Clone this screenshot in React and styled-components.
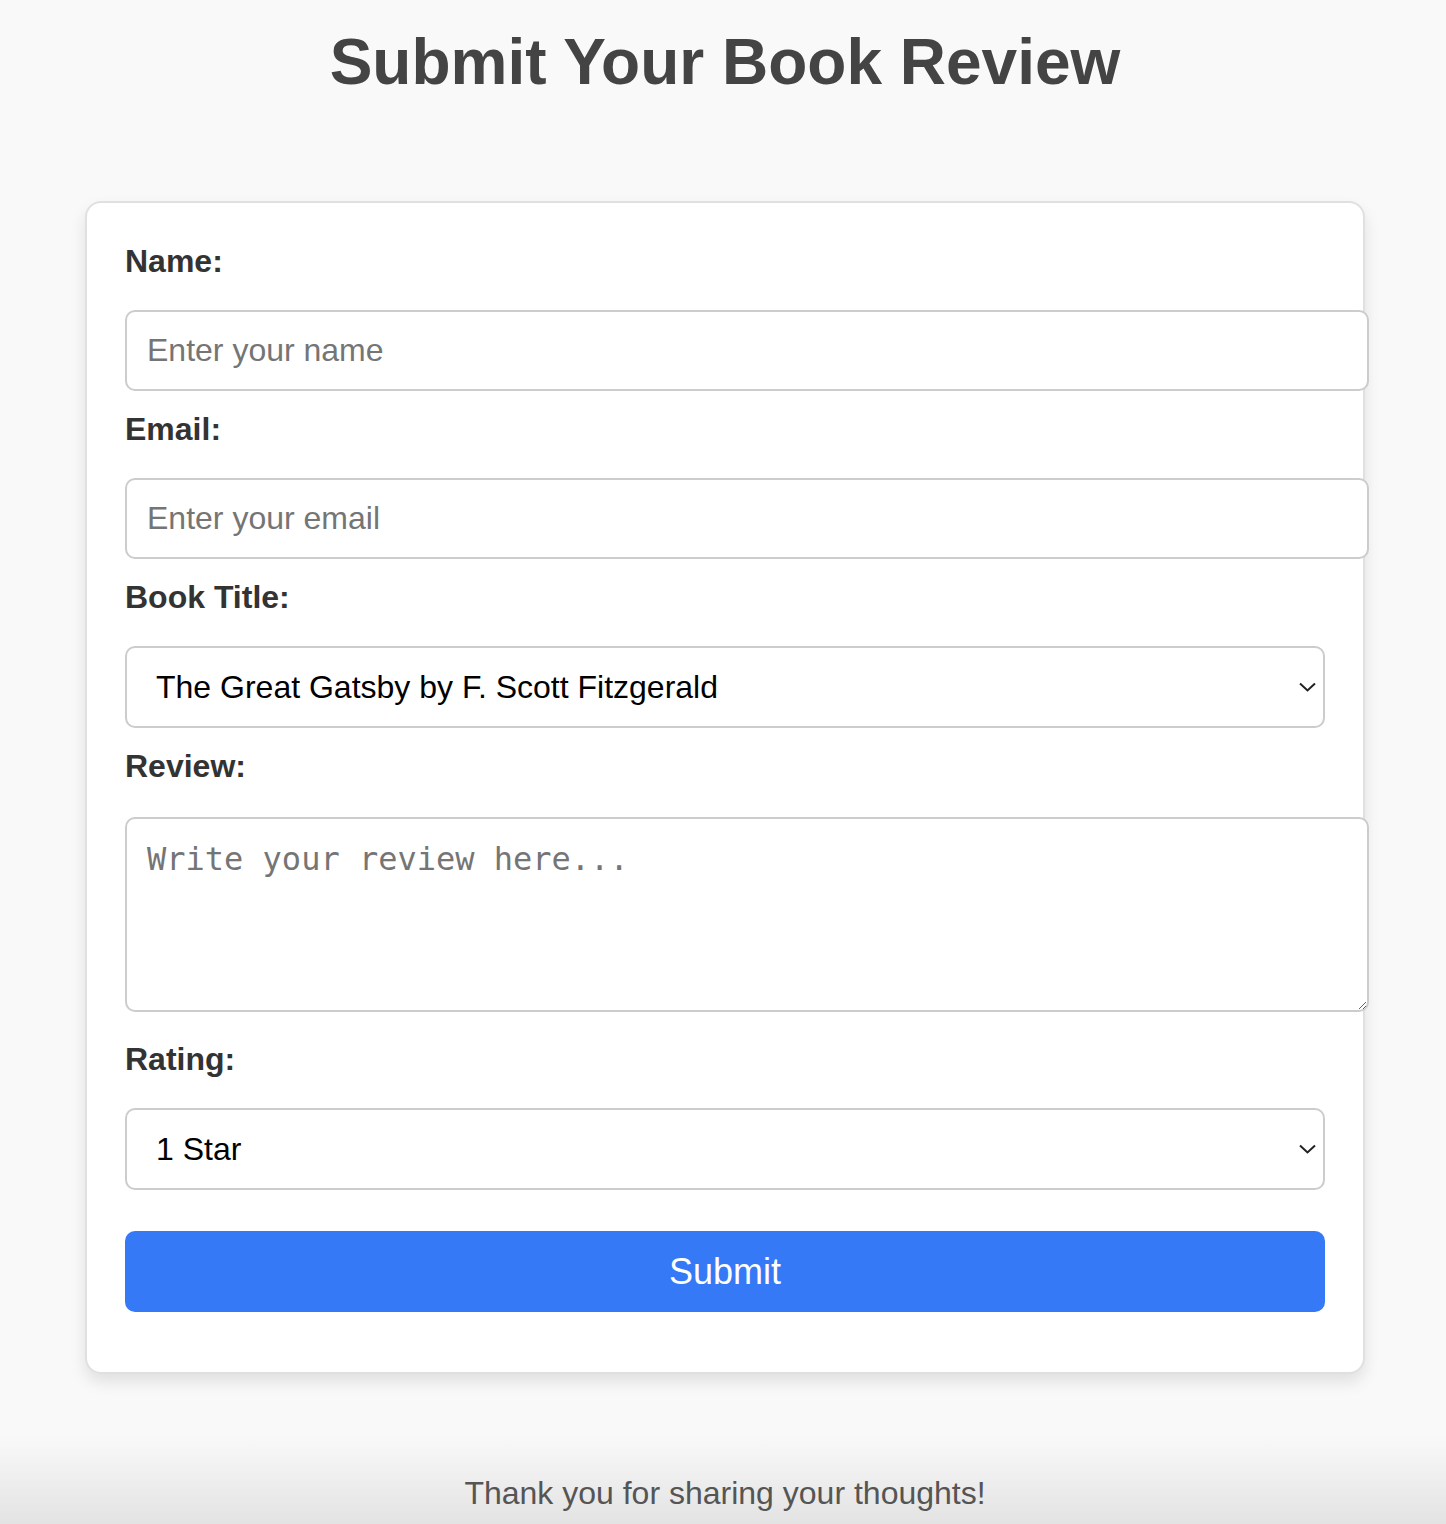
import React from 'react'
import styled, { createGlobalStyle } from 'styled-components';

const GlobalStyle = createGlobalStyle`
  body {
    margin: 0;
    background: #f9f9f9;
    font-family: "Liberation Sans", Arial, sans-serif;
  }
`;

const Page = styled.div`
  display: flex;
  flex-direction: column;
  align-items: center;
  padding-left: 4px;
`;

const Title = styled.h1`
  margin: 0;
  padding-top: 25px;
  font-size: 64px;
  line-height: 74px;
  font-weight: 700;
  color: #444;
  text-align: center;
`;

const Card = styled.form`
  box-sizing: border-box;
  width: 1280px;
  margin-top: 102px;
  padding: 40px 38px;
  background: #fff;
  border: 2px solid #e0e0e0;
  border-radius: 16px;
  box-shadow: 0 8px 16px rgba(0, 0, 0, 0.1);
`;

const Label = styled.label`
  display: block;
  margin-bottom: 30px;
  font-size: 32px;
  line-height: 37px;
  font-weight: 700;
  color: #333;
`;

const Input = styled.input`
  display: block;
  width: 100%;
  margin: 0 0 20px;
  padding: 20px;
  border: 2px solid #ccc;
  border-radius: 10px;
  font-family: inherit;
  font-size: 32px;
  line-height: 37px;
  color: #000;
  outline: none;

  &::placeholder {
    color: #757575;
  }
`;

const SelectBox = styled.div`
  position: relative;
  margin: 0 0 20px;
`;

const Select = styled.select`
  display: block;
  box-sizing: border-box;
  width: 100%;
  height: 82px;
  padding: 0 60px 0 29px;
  border: 2px solid #ccc;
  border-radius: 10px;
  background: #fff;
  -webkit-appearance: none;
  appearance: none;
  font-family: inherit;
  font-size: 32px;
  color: #000;
  outline: none;
`;

const Chevron = styled.svg`
  position: absolute;
  top: calc(50% - 5px);
  right: 9px;
  width: 17px;
  height: 10px;
  pointer-events: none;
`;

const TextArea = styled.textarea`
  display: block;
  width: 100%;
  height: 151px;
  margin: 32px 0 29px;
  padding: 20px;
  border: 2px solid #ccc;
  border-radius: 10px;
  font-family: "DejaVu Sans Mono", "Liberation Mono", monospace;
  font-size: 32px;
  line-height: 40px;
  color: #000;
  outline: none;

  &::placeholder {
    color: #757575;
  }
`;

const Button = styled.button`
  display: block;
  box-sizing: border-box;
  width: 100%;
  height: 81px;
  margin: 41px 0 20px;
  border: none;
  border-radius: 10px;
  background: #3579f6;
  color: #fff;
  font-family: inherit;
  font-size: 36px;
  cursor: pointer;
`;

const Footer = styled.footer`
  align-self: stretch;
  margin: 61px 0 0 -4px;
  padding: 40px 0 40px 4px;
  background: linear-gradient(to bottom, #f9f9f9, #dcdcdc);
  text-align: center;
  font-size: 32px;
  line-height: 37px;
  color: #555;
`;

const Dropdown = ({ children }) => (
  <SelectBox>
    <Select>{children}</Select>
    <Chevron viewBox="0 0 17 10">
      <path d="M1 1.5 L8.5 8.5 L16 1.5" fill="none" stroke="#222" strokeWidth="2" />
    </Chevron>
  </SelectBox>
);

const books = [
  'The Great Gatsby by F. Scott Fitzgerald',
  'To Kill a Mockingbird by Harper Lee',
  '1984 by George Orwell',
  'Pride and Prejudice by Jane Austen',
];

const ratings = ['1 Star', '2 Stars', '3 Stars', '4 Stars', '5 Stars'];

const App = () => {
  return (
    <Page>
      <GlobalStyle />
      <Title>Submit Your Book Review</Title>
      <Card onSubmit={e => e.preventDefault()}>
        <Label htmlFor="name">Name:</Label>
        <Input id="name" type="text" placeholder="Enter your name" />

        <Label htmlFor="email">Email:</Label>
        <Input id="email" type="email" placeholder="Enter your email" />

        <Label htmlFor="book">Book Title:</Label>
        <Dropdown>
          {books.map(b => <option key={b} value={b}>{b}</option>)}
        </Dropdown>

        <Label htmlFor="review">Review:</Label>
        <TextArea id="review" placeholder="Write your review here..." />

        <Label htmlFor="rating">Rating:</Label>
        <Dropdown>
          {ratings.map(r => <option key={r} value={r}>{r}</option>)}
        </Dropdown>

        <Button type="submit">Submit</Button>
      </Card>
      <Footer>Thank you for sharing your thoughts!</Footer>
    </Page>
  )
}

export default App
